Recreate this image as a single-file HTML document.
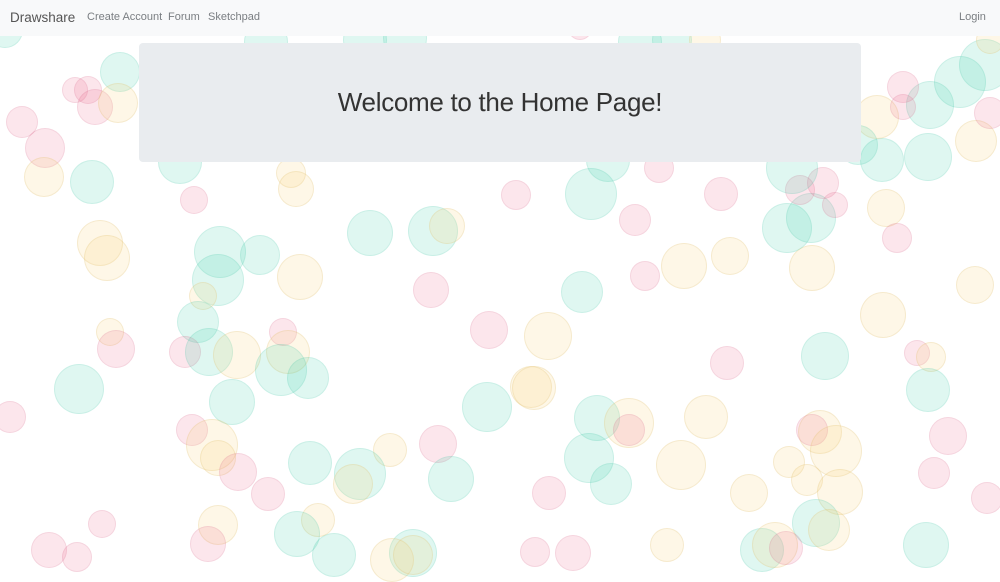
<!DOCTYPE html>
<html><head><meta charset="utf-8"><style>
body{margin:0;width:1000px;height:563px;overflow:hidden;background:#fff;position:relative;font-family:"Liberation Sans",sans-serif}
.c{position:absolute;border-radius:50%;box-sizing:border-box}
.g{background:rgba(40,200,160,.15);border:1px solid rgba(40,180,150,.12)}
.p{background:rgba(235,90,130,.15);border:1px solid rgba(200,80,120,.12)}
.y{background:rgba(250,210,120,.18);border:1px solid rgba(210,180,100,.2)}
nav{position:absolute;left:0;top:0;width:1000px;height:36px;background:#f8f9fa;z-index:5}
nav span{position:absolute;top:11px;font-size:11px;color:#7a7e82}
nav .b{left:10px;top:10px;font-size:13.5px;color:#555}
.j{position:absolute;left:139px;top:43px;width:722px;height:119px;background:#e9ecef;border-radius:4px;z-index:5;text-align:center}
.j h1{margin:0;font-weight:300;font-size:26px;color:#333;line-height:119px;font-family:"Liberation Sans",sans-serif;letter-spacing:-.3px}
</style></head><body>
<nav><span class="b">Drawshare</span><span style="left:87px">Create Account</span><span style="left:168px">Forum</span><span style="left:208px">Sketchpad</span><span style="left:959px">Login</span></nav>
<div class="j"><h1>Welcome to the Home Page!</h1></div>
<div id="b"></div>
<script>
var d="g5,30,18 g120,72,20 p75,90,13 p88,90,14 p95,107,18 y118,103,20 p22,122,16 p45,148,20 y44,177,20 g92,182,22 g180,162,22 p194,200,14 y100,243,23 y107,258,23 g220,252,26 g260,255,20 g218,280,26 y300,277,23 y203,296,14 g198,322,21 y110,332,14 p116,349,19 p283,332,14 p185,352,16 g209,352,24 y237,355,24 y288,352,22 g281,370,26 g308,378,21 g79,389,25 p10,417,16 g232,402,23 p192,430,16 y212,445,26 y218,458,18 p238,472,19 p268,494,17 g310,463,22 y390,450,17 g360,474,26 y353,484,20 p438,444,19 g451,479,23 g370,233,23 g433,231,25 y447,226,18 p516,195,15 p431,290,18 g591,194,26 p635,220,16 p721,194,17 p659,168,15 y291,173,15 y296,189,18 g608,160,22 p645,276,15 y684,266,23 y730,256,19 g582,292,21 y548,336,24 p489,330,19 y531,387,21 y534,388,22 g487,407,25 g597,418,23 y629,423,25 p629,430,16 y706,417,22 p727,363,17 g589,458,25 g611,484,21 y681,465,25 y749,493,19 p549,493,17 g825,356,24 y883,315,23 y975,285,19 p917,353,13 y931,357,15 g928,390,22 p948,436,19 p934,473,16 p987,498,16 g926,545,23 y812,268,23 y886,208,19 p897,238,15 g787,228,25 g811,218,25 p800,190,15 p823,183,16 p835,205,13 g792,168,26 g882,160,22 g928,157,24 y976,141,21 y877,117,22 g930,105,24 p903,87,16 p903,107,13 g960,82,26 g985,65,26 p990,113,16 y990,40,14 g858,145,20 y820,432,22 p812,430,16 y836,451,26 y789,462,16 y807,480,16 y840,492,23 g816,523,24 y829,530,21 g762,550,22 y775,545,23 p786,548,17 y667,545,17 p573,553,18 p535,552,15 g413,553,24 y392,560,22 y413,555,20 g334,555,22 y318,520,17 g297,534,23 y218,525,20 p208,544,18 p102,524,14 p49,550,18 p77,557,15 g266,42,22 g365,40,22 g405,38,22 p580,28,12 g640,42,22 g672,40,20 y705,40,16".split(" ");
var h="";d.forEach(function(s){var t=s[0],a=s.slice(1).split(",").map(Number);h+='<div class="c '+t+'" style="left:'+(a[0]-a[2])+'px;top:'+(a[1]-a[2])+'px;width:'+2*a[2]+'px;height:'+2*a[2]+'px"></div>';});
document.getElementById("b").innerHTML=h;
</script>
</body></html>
